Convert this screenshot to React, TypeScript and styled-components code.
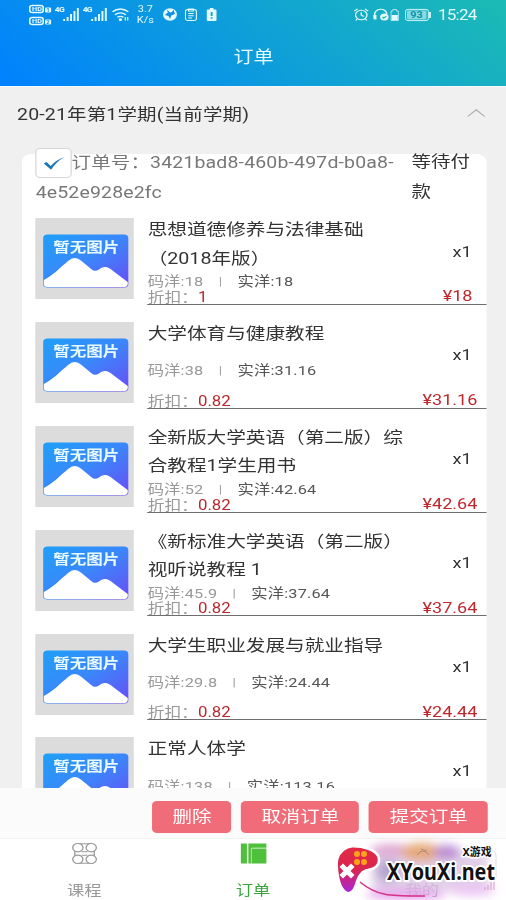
import React from 'react';
import styled, { createGlobalStyle } from 'styled-components';

const GlobalStyle = createGlobalStyle`
  *, *::before, *::after { box-sizing: border-box; }
  html, body { margin: 0; padding: 0; background: #f0f0f0; }
  body { font-family: Roboto, "Noto Sans CJK SC", sans-serif; overflow: hidden; }
`;

const Page = styled.div`
  position: relative;
  width: 506px;
  height: 900px;
  overflow: hidden;
`;

/* The phone layout is 416px wide and is widened to fill the window. */
const Screen = styled.div`
  display: flex;
  flex-direction: column;
  width: 416px;
  height: 900px;
  transform: scaleX(1.21635);
  transform-origin: 0 0;
  background: #f0f0f0;
  color: #333;
  font-size: 16px;
`;

const Header = styled.header`
  flex: none;
  height: 86px;
  background: linear-gradient(45deg, #0081ff, #1cbbb4);
  color: #e4fbff;
`;

const StatusBar = styled.div`
  display: flex;
  align-items: center;
  height: 29px;
  padding: 0 23.5px 0 24px;
`;

const Icon = styled.svg<{ $gap?: number }>`
  flex: none;
  display: block;
  overflow: visible;
  margin-right: ${(p) => p.$gap ?? 0}px;
`;

const HdStack = styled.div`
  display: flex;
  flex-direction: column;
  gap: 4px;
  margin-right: 3px;
`;

const Network = styled.span`
  align-self: flex-start;
  margin-top: 6px;
  width: 7px;
  font-size: 7px;
  line-height: 9px;
  font-weight: 700;
  letter-spacing: -0.6px;
`;

const Speed = styled.span`
  width: 15px;
  margin-right: 7px;
  font-size: 9px;
  line-height: 10.5px;
  text-align: center;
`;

const Spacer = styled.span`
  flex: 1;
`;

const Clock = styled.time`
  font-size: 14px;
  line-height: 18px;
  width: 32.5px;
  letter-spacing: -0.6px;
  white-space: nowrap;
`;

const PageTitle = styled.h1`
  margin: 0;
  height: 57px;
  padding-left: 1px;
  font-size: 16.5px;
  font-weight: 400;
  line-height: 58px;
  text-align: center;
`;

const Term = styled.div`
  flex: none;
  display: flex;
  align-items: center;
  justify-content: space-between;
  height: 54px;
  padding: 0 17px 1px 14px;
  border-top: 1px solid #f8f8f8;
  letter-spacing: 0.15px;
  white-space: nowrap;
`;

const Content = styled.main`
  flex: 1;
  min-height: 0;
  overflow: hidden;
  padding: 14px 15.6px 0 18px;
`;

const Card = styled.section`
  background: #fff;
  border-radius: 8px;
  padding-left: 11.3px;
  height: 700px;
`;

const OrderHead = styled.div`
  display: flex;
  align-items: flex-start;
  height: 61.5px;
  line-height: 29.7px;
`;

const OrderNumber = styled.div`
  width: 309px;
  margin-top: -6px;
  color: #777;
  letter-spacing: 0.14px;
  white-space: nowrap;
`;

const CheckBox = styled.span`
  display: inline-flex;
  align-items: center;
  justify-content: center;
  width: 29.5px;
  height: 30px;
  vertical-align: top;
  border: 1.5px solid #d6d6d6;
  border-radius: 4px;
  background: #fff;
`;

const State = styled.div`
  width: 52px;
  margin-top: -7px;
`;

const Item = styled.article`
  display: flex;
  height: 89.3px;
  margin-bottom: 14.6px;
`;

const Thumb = styled.div`
  flex: none;
  width: 80.6px;
  height: 81px;
  margin: 2.5px 11.5px 0 0;
  background: #dcdcdc;
`;

const Body = styled.div`
  flex: 1;
  display: flex;
  border-bottom: 1px solid #6e6e6e;
`;

const Info = styled.div`
  flex: 1;
  display: flex;
  flex-direction: column;
  justify-content: space-between;
  padding-top: 0.5px;
  white-space: nowrap;
`;

const Name = styled.div`
  line-height: 28.7px;
  font-size: 16.15px;
  white-space: pre-line;
`;

const Meta = styled.div`
  display: flex;
  margin-bottom: -0.5px;
  line-height: 16px;
  font-size: 13.4px;
  letter-spacing: 0.15px;
  color: #999;
`;

const Divider = styled.span`
  width: 28px;
  text-align: center;
  font-size: 11px;
`;

const Actual = styled.span`
  color: #555;
`;

const Discount = styled.div`
  height: 14px;
  line-height: 15px;
  font-size: 13.8px;
  color: #999;
`;

const Rate = styled.span`
  color: #b8282c;
`;

const Side = styled.div`
  display: flex;
  flex-direction: column;
  align-items: flex-end;
  padding-top: 26px;
`;

const Quantity = styled.span`
  margin-right: 12.5px;
  font-size: 15px;
  line-height: 20px;
`;

const Price = styled.span<{ $inset: number }>`
  margin-top: 25.5px;
  margin-right: ${(p) => p.$inset}px;
  font-size: 14.8px;
  line-height: 18px;
  color: #c0272d;
`;

const Actions = styled.div`
  flex: none;
  display: flex;
  align-items: center;
  justify-content: flex-end;
  gap: 8px;
  height: 51px;
  padding: 8px 14.6px 0 0;
  background: #fbfbfb;
  border-bottom: 1px solid #f4f4f4;
`;

const ActionButton = styled.button<{ $width: number }>`
  width: ${(p) => p.$width}px;
  height: 32px;
  padding: 0;
  border: 0;
  border-radius: 4px;
  background: #f06c79;
  color: #fff;
  font: inherit;
  line-height: 30px;
`;

const TabBar = styled.nav`
  flex: none;
  display: flex;
  height: 61px;
  background: #fff;
`;

const Tab = styled.a<{ $active?: boolean }>`
  flex: 1;
  display: flex;
  flex-direction: column;
  align-items: center;
  padding-top: 4px;
  font-size: 14.2px;
  line-height: 20px;
  color: ${(p) => (p.$active ? '#39a33c' : '#999')};

  span { margin-top: 16px; }
`;

const Watermark = styled.div`
  position: absolute;
  left: 330px;
  top: 835px;
  width: 176px;
  height: 65px;
`;

function Hd({ n }: { n: number }) {
  return (
    <Icon width="18" height="8" viewBox="0 0 18 8">
      <rect x=".5" y=".5" width="11" height="7" rx="2" fill="none" stroke="currentColor" strokeWidth="1.3" />
      <text x="2.4" y="6.2" fontSize="6" fontWeight="700" fill="currentColor">HD</text>
      <rect x="13" y="2.5" width="5" height="5" rx="1" fill="currentColor" />
      <text x="14" y="7" fontSize="5" fontWeight="700" fill="#148ff0">{n}</text>
    </Icon>
  );
}

function Signal({ gap }: { gap: number }) {
  return (
    <Icon $gap={gap} width="13" height="13" viewBox="0 0 13 13" fill="currentColor">
      <path d="M0 11h1.5v2H0zM2.8 9h1.6v4H2.8zM5.6 6h1.6v7H5.6zM8.4 3H10v10H8.4zM11.2 0h1.6v13h-1.6z" />
    </Icon>
  );
}

function StatusIcons() {
  return (
    <StatusBar>
      <HdStack><Hd n={1} /><Hd n={2} /></HdStack>
      <Network>4G</Network>
      <Signal gap={3} />
      <Network>4G</Network>
      <Signal gap={4} />
      <Icon $gap={6} width="14" height="13" viewBox="0 0 14 13" fill="none" stroke="currentColor" strokeWidth="1.4">
        <path d="M.5 3.8Q7-1.8 13.500 3.8M2.500 6.700Q7 3 11.500 6.700M4.500 9.300Q7 7.400 9.500 9.300" />
        <circle cx="7" cy="11.700" r=".7" fill="currentColor" />
        <path d="M11 9v3.500M13 9v3.500" strokeWidth="1" />
      </Icon>
      <Speed>3.7 K/s</Speed>
      <Icon $gap={6.5} width="11.500" height="13" viewBox="0 0 11.5 13">
        <ellipse cx="5.750" cy="6.500" rx="5.700" ry="6.200" fill="currentColor" />
        <path d="M3.200 1.500l.8 3-2.500 2.500 3 1 1.300 3 1-3.500 3-1.500-1-4-1.800 2.300-1.200.2z" fill="#128edc" />
        <path d="M5 1l1.300 2.500L8 1z" fill="currentColor" />
      </Icon>
      <Icon $gap={8} width="10" height="13" viewBox="0 0 10 13" fill="none" stroke="currentColor" strokeWidth=".9">
        <rect x=".5" y="1.500" width="9" height="11" rx="2" />
        <path d="M3 1h4v2H3zM2.800 5.500h4.400M2.800 7.800h4.400M2.800 10h3" />
      </Icon>
      <Icon width="8" height="13" viewBox="0 0 8 13">
        <path d="M2.500 0h3v1.500H7q1 0 1 1V12q0 1-1 1H1q-1 0-1-1V2.500q0-1 1-1h1.500z" fill="currentColor" />
        <path d="M4 4v4M4 9.300v1.500" stroke="#159bd5" strokeWidth="1.500" />
      </Icon>
      <Spacer />
      <Icon $gap={4} width="12" height="13" viewBox="0 0 12 13" fill="none" stroke="currentColor" strokeWidth="1.100">
        <circle cx="6" cy="7" r="4.700" />
        <path d="M6 4.200V7l2 1.500M.3 3.200L3 .8M11.700 3.200L9 .8M2.500 11L1.500 12.500M9.500 11l1 1.500" />
      </Icon>
      <Icon $gap={1} width="12.500" height="13" viewBox="0 0 12.500 13">
        <path d="M1 10V6.500a5 5 0 0 1 10-.5" fill="none" stroke="currentColor" strokeWidth="1.200" />
        <path d="M0 7h2.500v4.500H1q-1 0-1-1z" fill="currentColor" />
        <circle cx="9" cy="9" r="3.500" fill="currentColor" />
        <path d="M7.300 9l1.200 1.200 2.200-2.200" fill="none" stroke="#17aec4" />
      </Icon>
      <Icon $gap={5.5} width="7" height="12" viewBox="0 0 7 12">
        <path d="M2 .5h3v1.500h1.500v9.500H.5V2H2z" fill="none" stroke="currentColor" strokeWidth=".8" opacity=".8" />
        <path d="M1 6h5v5H1z" fill="currentColor" />
      </Icon>
      <Icon $gap={5} width="22" height="12" viewBox="0 0 22 12">
        <rect x=".4" y=".4" width="18.800" height="11.200" rx="2" fill="none" stroke="currentColor" strokeWidth=".8" />
        <rect x="1.600" y="1.600" width="16" height="8.800" rx="1" fill="#b2ecee" opacity=".7" />
        <path d="M20.500 3v6" stroke="currentColor" strokeWidth="1.400" />
        <text x="4.300" y="9.200" fontSize="9" fontWeight="700" fill="#118fa8">93</text>
      </Icon>
      <Clock>15:24</Clock>
    </StatusBar>
  );
}

function NoPicture() {
  return (
    <svg width="80.6" height="81" viewBox="0 0 80.6 81">
      <defs>
        <linearGradient id="sky" x1="0" y1="0" x2="1" y2="1">
          <stop offset="0" stopColor="#1fa0f7" />
          <stop offset=".5" stopColor="#3b86fb" />
          <stop offset="1" stopColor="#6a4cf5" />
        </linearGradient>
      </defs>
      <rect x="6.500" y="16.500" width="70" height="53" rx="3.500" fill="url(#sky)" />
      <path
        d="M7 62C14 58 20 50 27 43C31 39 34 39 38 43L47 52C50 54 52 52 54 50C58 48 60 49 64 53L76 64V66Q76 69 73 69H10Q7 69 7 66Z"
        fill="#fff"
      />
      <text x="14.800" y="34.500" fontSize="13.600" fontWeight="700" fill="#e9fbff" fontFamily="Noto Sans CJK SC, sans-serif">
        暂无图片
      </text>
    </svg>
  );
}

interface Book {
  name: string;
  list: string;
  actual: string;
  rate?: string;
}

const books: Book[] = [
  { name: '思想道德修养与法律基础\n（2018年版）', list: '18', actual: '18', rate: '1' },
  { name: '大学体育与健康教程', list: '38', actual: '31.16', rate: '0.82' },
  { name: '全新版大学英语（第二版）综\n合教程1学生用书', list: '52', actual: '42.64', rate: '0.82' },
  { name: '《新标准大学英语（第二版）\n视听说教程 1', list: '45.9', actual: '37.64', rate: '0.82' },
  { name: '大学生职业发展与就业指导', list: '29.8', actual: '24.44', rate: '0.82' },
  { name: '正常人体学', list: '138', actual: '113.16' },
];

function BookRow({ book }: { book: Book }) {
  return (
    <Item>
      <Thumb><NoPicture /></Thumb>
      <Body>
        <Info>
          <Name>{book.name}</Name>
          <Meta>
            <span>码洋:{book.list}</span>
            <Divider>|</Divider>
            <Actual>实洋:{book.actual}</Actual>
          </Meta>
          <Discount>{book.rate && <>折扣：<Rate>{book.rate}</Rate></>}</Discount>
        </Info>
        <Side>
          <Quantity>x1</Quantity>
          {book.rate && <Price $inset={book.actual.length > 2 ? 8 : 12}>¥{book.actual}</Price>}
        </Side>
      </Body>
    </Item>
  );
}

function SiteMark() {
  return (
    <Watermark>
      <svg width="176" height="65" viewBox="0 0 176 65">
        <defs>
          <linearGradient id="pad" x1="0" y1="0" x2="0" y2="1">
            <stop offset="0" stopColor="#e32a43" />
            <stop offset=".5" stopColor="#d8264f" />
            <stop offset="1" stopColor="#a925e0" />
          </linearGradient>
          <filter id="soft" x="-30%" y="-50%" width="160%" height="200%">
            <feGaussianBlur stdDeviation="5" />
          </filter>
        </defs>
        <g filter="url(#soft)">
          <rect x="42" y="18" width="116" height="38" fill="#d9c3e2" opacity=".8" />
          <ellipse cx="62" cy="15" rx="22" ry="6" fill="#dfa6d0" />
          <ellipse cx="92" cy="17" rx="21" ry="9" fill="#e5a878" />
          <ellipse cx="117" cy="17" rx="13" ry="7" fill="#b98ad2" />
          <ellipse cx="58" cy="36" rx="12" ry="11" fill="#a99bc9" opacity=".8" />
          <ellipse cx="76" cy="60" rx="40" ry="5" fill="#e6a0ee" />
          <ellipse cx="142" cy="55" rx="23" ry="6" fill="#ecc6f3" />
        </g>
        <path d="M87 20q6-8 12 0M91 14l6 2" fill="none" stroke="#8c7776" opacity=".6" />
        <path d="M30 47C48 62 62 61 95 61" fill="none" stroke="#d63186" strokeWidth="1.600" />
        <path
          d="M13 15C20 10 25 11 32 12C41 14 49 18 49 25C49 31 44 34 38 35C31 36 28 42 26 50C24 56 21 59 17 58C11 55 8 45 7 35C6 26 7 20 13 15Z"
          fill="url(#pad)" stroke="#fff" strokeWidth="2.500"
        />
        <g fill="#ffa31a">
          <circle cx="27" cy="19" r="3" /><circle cx="34" cy="19" r="3" />
          <circle cx="27" cy="27" r="3" /><circle cx="34" cy="27" r="3" />
        </g>
        <path d="M13 32L21 40M21 32L13 40" stroke="#fff" strokeWidth="5" strokeLinecap="square" />
        <path d="M155 16h7q4 0 4 5v22" fill="none" stroke="#ddd" />
        <path d="M155 55v-3M158 55v-5M161 55v-8M164 55v-11" stroke="#d299c8" />
        <g stroke="#fff" paintOrder="stroke" strokeLinejoin="round" fill="#111" fontWeight="700">
          <text x="132.500" y="21" fontSize="11" strokeWidth="3" textLength="29" lengthAdjust="spacingAndGlyphs" fontFamily="Noto Sans, Noto Sans CJK SC, sans-serif">X游戏</text>
          <text x="57" y="45" fontSize="24" strokeWidth="4" textLength="108" lengthAdjust="spacingAndGlyphs" fontFamily="Noto Sans, sans-serif">XYouXi.net</text>
        </g>
      </svg>
    </Watermark>
  );
}

export default function App() {
  return (
    <Page>
      <GlobalStyle />
      <Screen>
        <Header>
          <StatusIcons />
          <PageTitle>订单</PageTitle>
        </Header>
        <Term>
          <span>20-21年第1学期(当前学期)</span>
          <Icon width="15" height="8" viewBox="0 0 15 8" fill="none" stroke="#aaa">
            <path d="M.5 7.500L7.500.8l7 6.700" />
          </Icon>
        </Term>
        <Content>
          <Card>
            <OrderHead>
              <OrderNumber>
                <CheckBox>
                  <Icon width="17" height="13" viewBox="0 0 17 13">
                    <path d="M0 6.500L2.300 5l3.400 4Q10 3 16.800 0Q10 5 6 12.800z" fill="#1976bd" />
                  </Icon>
                </CheckBox>
                订单号：3421bad8-460b-497d-b0a8-<br />4e52e928e2fc
              </OrderNumber>
              <State>等待付款</State>
            </OrderHead>
            {books.map((book) => <BookRow key={book.name} book={book} />)}
          </Card>
        </Content>
        <Actions>
          <ActionButton $width={65}>删除</ActionButton>
          <ActionButton $width={97}>取消订单</ActionButton>
          <ActionButton $width={98}>提交订单</ActionButton>
        </Actions>
        <TabBar>
          <Tab>
            <Icon width="21" height="21" viewBox="0 0 21 21" fill="none" stroke="#999" strokeWidth="1.100">
              <path d="M5 .8H16M5 20.200H16M2.500 8v5M18.500 8v5M8 8.800h5M8 12.200h5" />
              <g fill="#fff">
                <circle cx="5" cy="4.700" r="4.200" /><circle cx="16" cy="4.700" r="4.200" />
                <circle cx="5" cy="16.300" r="4.200" /><circle cx="16" cy="16.300" r="4.200" />
              </g>
            </Icon>
            <span>课程</span>
          </Tab>
          <Tab $active>
            <Icon width="21" height="21" viewBox="0 0 21 21" fill="#4fc03c">
              <path d="M0 .5h5v20H0zM6.200.5H21v4.300H9v15.700H6.200zM9 5.500h12v15H9z" />
              <path d="M8.700 5v15.500" stroke="#d9f3d3" strokeWidth=".6" />
            </Icon>
            <span>订单</span>
          </Tab>
          <Tab>
            <Icon width="21" height="21" viewBox="0 0 21 21" />
            <span>我的</span>
          </Tab>
        </TabBar>
      </Screen>
      <SiteMark />
    </Page>
  );
}
